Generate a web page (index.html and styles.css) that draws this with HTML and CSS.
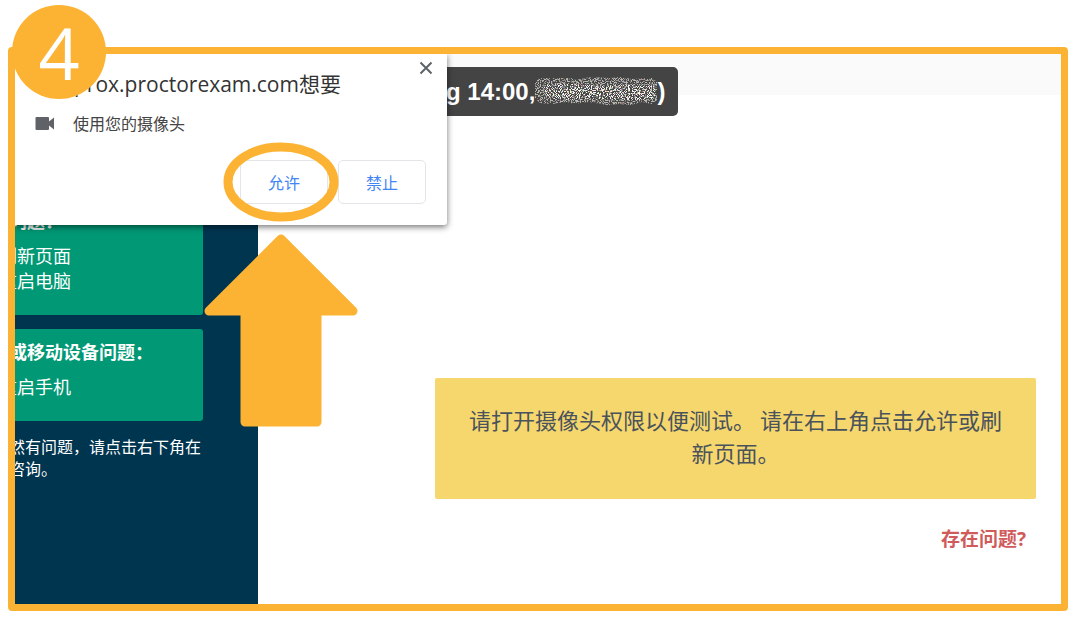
FILE: index.html
```html
<!DOCTYPE html>
<html lang="zh-CN">
<head>
    <meta charset="UTF-8">
    <meta name="viewport" content="width=device-width, initial-scale=1.0">
    <title>摄像头权限</title>
    <link rel="stylesheet" href="styles.css">
</head>
<body>
    <div class="step">
        <div class="screen">
            <aside class="sidebar">
                <div class="help-card">
                    <h3>问题&#xFF1A;</h3>
                    <ul>
                        <li>刷新页面</li>
                        <li>重启电脑</li>
                    </ul>
                </div>
                <div class="help-card">
                    <h3>或移动设备问题&#xFF1A;</h3>
                    <ul>
                        <li>重启手机</li>
                    </ul>
                </div>
                <p class="help-note">然有问题&#xFF0C;请点击右下角在<br>咨询。</p>
            </aside>

            <main class="content">
                <div class="topbar"></div>
                <div class="test">
                    <p class="alert">请打开摄像头权限以便测试。 请在右上角点击允许或刷新页面。</p>
                    <a class="issue-link" href="#">存在问题?</a>
                </div>
            </main>

            <div class="tooltip">
                <span>g 14:00,</span>
                <svg class="noise" viewBox="0 0 122 30" aria-hidden="true">
                    <filter id="grain" x="0" y="0" width="100%" height="100%" color-interpolation-filters="sRGB">
                        <feTurbulence type="fractalNoise" baseFrequency="0.9" numOctaves="3" seed="7" result="n"/>
                        <feColorMatrix in="n" type="matrix" values="1.2 .3 .6 0 -.2  .4 1.1 .6 0 -.2  .3 .4 1.5 0 -.2  0 0 0 0 1" result="c"/>
                        <feColorMatrix in="n" type="matrix" values="0 0 0 0 0  0 0 0 0 0  0 0 0 0 0  7 5 0 0 -5.7" result="m"/>
                        <feComposite in="c" in2="m" operator="in" result="g"/>
                        <feComposite in="g" in2="SourceGraphic" operator="in"/>
                    </filter>
                    <g filter="url(#grain)">
                        <path d="M4 1h32l5 2 14-3 20 1 10-1 12 2 20-1 5 4v18l-5 4-10-2-12 3-11-1-12 1-18-3-14 2-9-2-14 2-12-1-5-5v-15z" fill="#fff" fill-opacity=".65"/>
                        <path d="M8 8l28-1 30 2 30-1 24 1v13l-24 1-40-1-30 1-14-3z" fill="#fff"/>
                    </g>
                </svg>
                <span>)</span>
            </div>

            <section class="permission">
                <button class="close" type="button" aria-label="关闭">
                    <svg width="14" height="14" viewBox="0 0 14 14"><path d="M1.5 1.5l11 11M12.5 1.5l-11 11" stroke="#5f6368" stroke-width="2"/></svg>
                </button>
                <h2>prox.proctorexam.com想要</h2>
                <p class="request">
                    <svg width="20" height="14" viewBox="0 0 20 14"><path d="M1.5 0h11.500a1 1 0 0 1 1 1v3.500l5-4v12l-5-4v3.500a1 1 0 0 1-1 1h-11.500a1 1 0 0 1-1-1v-11a1 1 0 0 1 1-1z" fill="#5f6368"/></svg>
                    使用您的摄像头
                </p>
                <div class="actions">
                    <button type="button">允许</button>
                    <button type="button">禁止</button>
                </div>
            </section>
        </div>

        <svg class="ring" viewBox="0 0 116 80" aria-hidden="true"><ellipse cx="58" cy="40" rx="53" ry="35" fill="none" stroke="#fcb334" stroke-width="9"/></svg>
        <svg class="arrow" viewBox="0 0 154 193" aria-hidden="true"><path d="M77 5L149 77H113V188H41V77H5z" fill="#fcb334" stroke="#fcb334" stroke-width="9" stroke-linejoin="round"/></svg>
        <div class="badge">4</div>
    </div>
</body>
</html>
```
FILE: styles.css
```css
* {
    box-sizing: border-box;
}

body {
    margin: 0;
    background: #fff;
    font-family: "Open Sans", "Noto Sans CJK SC", sans-serif;
    color: #333;
}

h2, h3, p, ul {
    margin: 0;
    padding: 0;
}

.step {
    position: relative;
    padding: 47px 12px 9px 8px;
}

.screen {
    position: relative;
    display: flex;
    min-height: calc(100vh - 56px);
    border: 7px solid #fcb334;
    border-radius: 4px;
    overflow: hidden;
}

/* sidebar */
.sidebar {
    flex: none;
    width: 273px;
    margin-left: -30px;
    padding: 144px 55px 0 0;
    background: #003550;
    color: #fff;
    font-family: "Noto Sans CJK SC", sans-serif;
}

.help-card {
    margin-bottom: 14px;
    padding: 10px 14px 22px;
    border-radius: 3px;
    background: #019875;
    font-size: 18px;
    line-height: 25px;
}

.help-card h3 {
    padding-left: 10px;
    margin-bottom: 11px;
    font-size: 18px;
    line-height: 24px;
}

.help-card ul {
    list-style: none;
}

.help-note {
    padding-left: 24px;
    font-size: 16px;
    line-height: 22px;
    white-space: nowrap;
}

/* content */
.content {
    flex: 1;
    display: flex;
    flex-direction: column;
}

.topbar {
    height: 41px;
    background: #fafafa;
}

.test {
    display: flex;
    flex: 1;
    flex-direction: column;
    justify-content: flex-end;
    padding: 0 25px 51px 177px;
}

.alert {
    padding: 25px 24px 30px;
    border-radius: 2px;
    background: #f5d76e;
    color: #4a525c;
    font-family: "Noto Sans CJK SC", sans-serif;
    font-size: 22px;
    line-height: 33px;
    text-align: center;
}

.issue-link {
    align-self: flex-end;
    margin: 26px 10px 0 0;
    color: #cf5b5b;
    font-size: 19px;
    font-weight: bold;
    line-height: 28px;
    text-decoration: none;
}

.tooltip {
    position: absolute;
    top: 13px;
    left: 411px;
    display: flex;
    align-items: center;
    padding: 10px 13px 9px 20px;
    border-radius: 5px;
    background: #444;
    color: #fff;
    font-family: "Liberation Sans", sans-serif;
    font-size: 24px;
    font-weight: bold;
    line-height: 30px;
}

.noise {
    width: 122px;
    height: 30px;
}

/* browser permission popup */
.permission {
    position: absolute;
    top: 0;
    left: 0;
    width: 432px;
    padding: 15px 21px 21px 20px;
    border-radius: 0 0 3px 0;
    background: #fff;
    box-shadow: 0 2px 6px rgba(0, 0, 0, 0.55);
}

.permission h2 {
    padding-left: 39px;
    color: #333;
    font-size: 21px;
    font-weight: normal;
    line-height: 30px;
}

.close {
    position: absolute;
    top: 7px;
    right: 14px;
    display: flex;
    padding: 0;
    border: 0;
    background: none;
}

.request {
    display: flex;
    align-items: center;
    gap: 18px;
    margin-top: 13px;
    color: #444;
    font-size: 16px;
    line-height: 24px;
}

.actions {
    display: flex;
    justify-content: flex-end;
    gap: 10px;
    margin-top: 24px;
}

.actions button {
    width: 88px;
    height: 44px;
    border: 1px solid #e3e5e8;
    border-radius: 5px;
    background: #fff;
    color: #4285f4;
    font-family: inherit;
    font-size: 16px;
}

/* drawn over the screen */
.ring {
    position: absolute;
    top: 142px;
    left: 223px;
    width: 116px;
}

.arrow {
    position: absolute;
    top: 234px;
    left: 204px;
    width: 154px;
}

.badge {
    position: absolute;
    top: 5px;
    left: 12px;
    width: 94px;
    height: 94px;
    border-radius: 50%;
    background: #fcb334;
    color: #fff;
    font-family: "Open Sans", sans-serif;
    font-size: 72px;
    font-weight: 400;
    line-height: 94px;
    text-align: center;
}
```
